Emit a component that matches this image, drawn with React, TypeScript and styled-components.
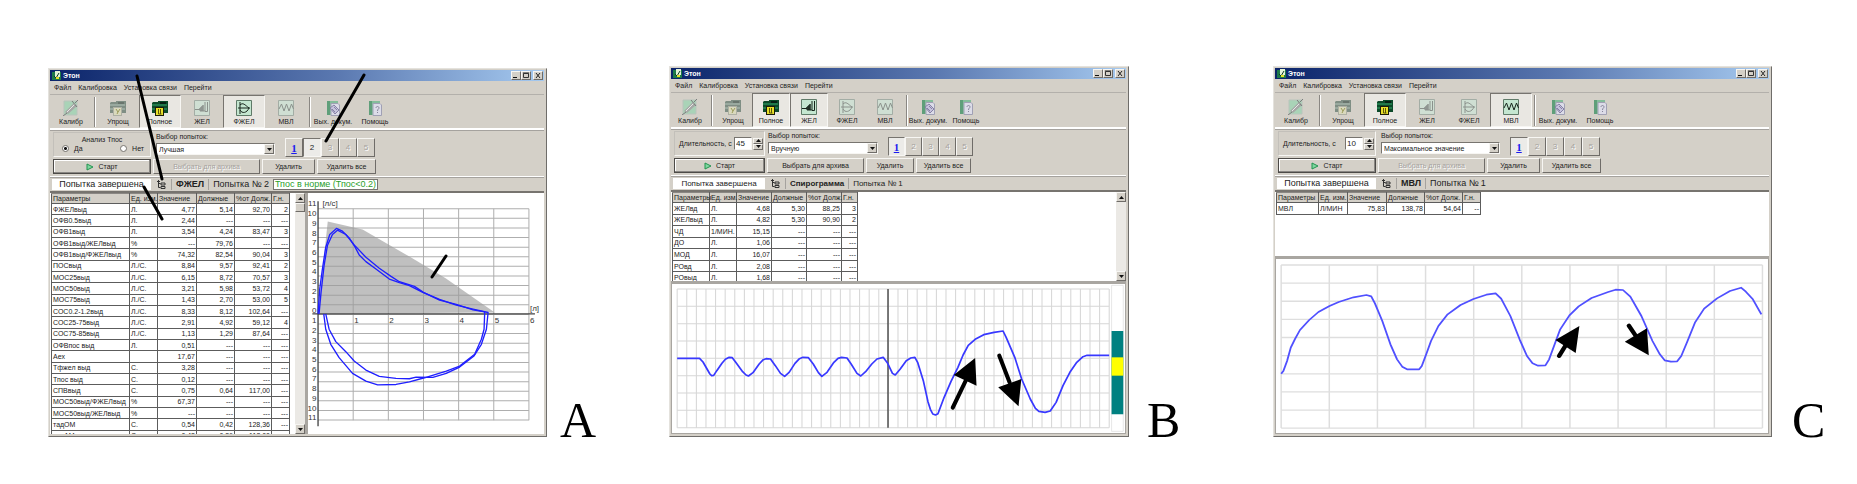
import React, { useState } from "react";
import styled, { createGlobalStyle, css } from "styled-components";

const face = "#d4d0c8";
const shade = "#8a8783";
const light = "#f7f6f3";

const GlobalStyle = createGlobalStyle`
  *, *::before, *::after { box-sizing: border-box; }
  body { margin: 0; background: #fff; }
  button, input, select { font: inherit; color: inherit; margin: 0; padding: 0; border-radius: 0; }
`;

const raised = css`
  border: 1px solid;
  border-color: ${light} #6f6c68 #6f6c68 ${light};
`;
const sunken = css`
  border: 1px solid;
  border-color: #77746f ${light} ${light} #77746f;
`;

const Page = styled.main`
  display: grid;
  grid-template-columns: 499fr 122px 460fr 144px 499fr 85px;
  align-items: end;
  padding: 66px 0 46px 48px;
  font: 7px/9px "Liberation Sans", sans-serif;
  color: #222;
`;

const Letter = styled.span<{ $gap: number }>`
  padding-left: ${(p) => p.$gap}px;
  font: 50px/34px "Liberation Serif", serif;
  color: #000;
`;

const Window = styled.section`
  position: relative;
  min-width: 0;
  display: flex;
  flex-direction: column;
  background: ${face};
  border: 1px solid;
  border-color: #e4e2dd #6f6d6a #6f6d6a #e4e2dd;
  padding: 1px 2px 2px 1px;
`;

const TitleBar = styled.header`
  display: flex;
  align-items: center;
  height: 11px;
  padding: 0 1px 0 2px;
  background: linear-gradient(90deg, #0b246a, #5a78b0 58%, #a6caf0);
`;
const Title = styled.h1`
  flex: 1;
  margin: 0 0 0 2px;
  font: bold 7px/11px "Liberation Sans", sans-serif;
  color: #fff;
`;
const CaptionButton = styled.button`
  ${raised}
  display: flex;
  width: 10px;
  height: 9px;
  background: ${face};
  &:last-child { margin-left: 2px; }
  svg { display: block; width: 8px; height: 7px; }
`;

const MenuBar = styled.nav`
  display: flex;
  align-items: center;
  gap: 7px;
  height: 14px;
  padding-left: 4px;
  border-bottom: 1px solid #b3b0ab;
`;
const MenuLink = styled.a`
  color: inherit;
  text-decoration: none;
  white-space: nowrap;
`;

const Toolbar = styled.div<{ $height: number }>`
  display: flex;
  height: ${(p) => p.$height}px;
`;
const ToolDivider = styled.span`
  width: 1px;
  margin: 2px 2px 1px;
  background: ${shade};
  box-shadow: 1px 0 #fff;
`;
const Tool = styled.button<{ $width: number; $on?: boolean }>`
  display: flex;
  flex-direction: column;
  align-items: center;
  justify-content: flex-end;
  gap: 1px;
  width: ${(p) => p.$width}px;
  padding-bottom: 1px;
  background: ${(p) => (p.$on ? "#e9e7e2" : "transparent")};
  border: 1px solid transparent;
  ${(p) => p.$on && sunken}
  white-space: nowrap;
  svg { width: 16px; height: 16px; flex: none; }
`;

const Groove = styled.hr<{ $height: number }>`
  width: 100%;
  height: ${(p) => p.$height}px;
  margin: 0;
  border: 0;
  border-bottom: 1px solid #a5a29e;
  background: #fff;
`;

const Settings = styled.form`
  height: 45px;
  padding: 1px 3px 2px;
`;
const SettingsRow = styled.div`
  display: flex;
  height: 25px;
  margin-bottom: 2px;
`;
const Box = styled.fieldset<{ $width: number }>`
  width: ${(p) => p.$width}px;
  margin: 0;
  padding: 0;
  border: 1px solid;
  border-color: #c3c0ba ${light} ${light} #c3c0ba;
  min-width: 0;
`;
const Legend = styled.div`
  padding-top: 2px;
  text-align: center;
`;
const Radios = styled.div`
  display: flex;
  justify-content: space-between;
  padding: 0 6px 0 8px;
`;
const RadioLabel = styled.label`
  display: flex;
  align-items: center;
  gap: 5px;
  input {
    appearance: none;
    width: 7px;
    height: 7px;
    border: 1px solid #77746f;
    border-radius: 50%;
    background: #fff;
  }
  input:checked { background: radial-gradient(#111 1px, #fff 2px); }
`;
const Duration = styled.div`
  display: flex;
  align-items: center;
  justify-content: space-between;
  height: 23px;
  padding: 0 1px 0 4px;
  white-space: nowrap;
  input {
    ${sunken}
    width: 18px;
    height: 13px;
    padding-left: 1px;
    background: #fff;
    font-size: 8px;
  }
`;
const DurationField = styled.span`
  display: flex;
  align-items: center;
`;
const Spinner = styled.span`
  display: flex;
  flex-direction: column;
  margin-left: 1px;
  button {
    ${raised}
    display: flex;
    align-items: center;
    justify-content: center;
    width: 10px;
    height: 6px;
    background: ${face};
  }
  svg { display: block; width: 5px; height: 3px; }
`;
const Choice = styled.label<{ $width: number; $gap: number }>`
  position: relative;
  display: block;
  width: ${(p) => p.$width}px;
  margin-left: ${(p) => p.$gap}px;
  white-space: nowrap;
  select {
    ${sunken}
    appearance: none;
    display: block;
    width: 100%;
    height: 12px;
    padding: 0 11px 0 2px;
    background: #fff;
    margin-top: 2px;
  }
`;
const DropArrow = styled.span`
  ${raised}
  position: absolute;
  right: 1px;
  bottom: 3px;
  display: flex;
  align-items: center;
  justify-content: center;
  width: 10px;
  height: 10px;
  background: ${face};
  pointer-events: none;
  svg { width: 5px; height: 3px; }
`;
const Attempts = styled.div`
  display: flex;
  align-items: flex-end;
  margin-left: 10px;
`;
const Attempt = styled.button<{ $width: number; $down?: boolean; $marked?: boolean }>`
  ${(p) => (p.$down ? sunken : raised)}
  width: ${(p) => p.$width}px;
  height: 19px;
  background: ${(p) => (p.$down ? "#ecebe8" : face)};
  font-size: 8px;
  &:disabled { color: #a5a29e; text-shadow: 1px 1px #fff; }
  ${(p) =>
    p.$marked &&
    css`
      font: bold 11px/12px "Liberation Serif", serif;
      color: #1b1bf0;
      text-decoration: underline;
    `}
`;
const Commands = styled.div<{ $columns: string }>`
  display: grid;
  grid-template-columns: ${(p) => p.$columns};
  gap: 2px;
`;
const Command = styled.button<{ $main?: boolean }>`
  ${raised}
  display: flex;
  align-items: center;
  justify-content: center;
  gap: 4px;
  height: 15px;
  background: ${face};
  white-space: nowrap;
  ${(p) => p.$main && css`border: 1px solid #4d4b48; box-shadow: inset -1px -1px #8a8783, inset 1px 1px #fff;`}
  &:disabled { color: #a5a29e; text-shadow: 1px 1px #fff; }
  svg { width: 8px; height: 8px; }
`;

const Status = styled.div<{ $size: number }>`
  display: flex;
  align-items: center;
  height: 13px;
  padding: 1px 2px;
  font-size: ${(p) => p.$size}px;
  line-height: 11px;
  white-space: nowrap;
`;
const StatusText = styled.span<{ $width: number }>`
  width: ${(p) => p.$width}px;
  background: #fff;
  text-align: center;
`;
const StatusIcon = styled.span`
  display: flex;
  justify-content: center;
  width: 20px;
  svg { width: 9px; height: 9px; }
`;
const StatusName = styled.strong`
  padding: 0 4px;
  border: solid #a5a29e;
  border-width: 0 1px;
`;
const StatusAttempt = styled.span`
  padding: 0 4px;
`;
const Verdict = styled.span`
  padding: 0 2px;
  outline: 1px solid #77746f;
  outline-offset: -1px;
  background: #fff;
  color: #2ba02b;
`;

const Split = styled.div`
  display: flex;
  gap: 3px;
  height: 243px;
  background: #a9a6a1;
  border-top: 2px solid #77746f;
`;
const TablePane = styled.div<{ $width?: number; $height: number; $framed?: boolean }>`
  display: flex;
  justify-content: space-between;
  ${(p) => p.$width && `width: ${p.$width}px;`}
  height: ${(p) => p.$height}px;
  ${(p) => p.$framed && "border-top: 2px solid #77746f;"}
  padding-left: 1px;
  overflow: hidden;
  background: #fff;
`;
const Data = styled.table<{ $height: number }>`
  flex: none;
  table-layout: fixed;
  height: ${(p) => p.$height}px;
  border-collapse: collapse;
  white-space: nowrap;
  th, td {
    padding: 0 1px;
    border: 1px solid #5c5c5c;
    font-weight: normal;
    text-align: left;
  }
  th { background: ${face}; border-top-color: #8a8783; }
  td:nth-child(n + 3) { text-align: right; }
`;
const ScrollBar = styled.div`
  display: flex;
  flex-direction: column;
  justify-content: space-between;
  width: 10px;
  background: #ebe9e5;
  button {
    ${raised}
    display: flex;
    align-items: center;
    justify-content: center;
    height: 10px;
    background: ${face};
  }
  svg { width: 5px; height: 3px; }
`;
const Thumb = styled.span`
  ${raised}
  height: 9px;
  margin-bottom: auto;
  background: ${face};
`;
const ChartPane = styled.div<{ $height: number; $framed?: boolean }>`
  flex: ${(p) => (p.$framed ? "none" : "1")};
  min-width: 0;
  height: ${(p) => p.$height}px;
  background: #fff;
  ${(p) => p.$framed && "border: solid #a9a6a1; border-width: 3px 1px 1px;"}
  svg { display: block; width: 100%; height: 100%; }
`;
const Marks = styled.svg`
  position: absolute;
  left: -1px;
  top: -1px;
  width: 499px;
  height: 369px;
  pointer-events: none;
`;

const Down = () => <svg viewBox="0 0 5 3"><path d="M0 0h5L2.5 3z" fill="#111" /></svg>;
const Up = () => <svg viewBox="0 0 5 3"><path d="M0 3h5L2.5 0z" fill="#111" /></svg>;

type Glyph = "cal" | "simple" | "full" | "vc" | "fvc" | "mvv" | "doc" | "help";

function ToolIcon({ glyph, on }: { glyph: Glyph; on?: boolean }) {
  const ink = on ? "#17241b" : "#8b918c";
  const tint = on ? "#c4e6d0" : "#cfdfd3";
  const frame = <path d="M.5 .5h15v15H.5z" fill={tint} stroke={on ? "#5f7a68" : "#a3ada5"} />;
  switch (glyph) {
    case "cal":
      return (
        <svg viewBox="0 0 16 16">
          <path d="M1 1h13v14H1z" fill="#a9d3b7" />
          <path d="M1 1h13v14H1z" fill="none" stroke="#b9c4bc" />
          <path d="M2 12L11 3l3 3-9 8z" fill="#a6a8a6" />
          <path d="M4 12l8-8" stroke="#e6e6e6" />
          <path d="M12 3l3-3M9 1l5 6M0 16l4-3" stroke="#7c7c7c" fill="none" />
        </svg>
      );
    case "simple":
    case "full": {
      const full = glyph === "full";
      return (
        <svg viewBox="0 0 16 16">
          <path d="M0 3l1-1h5V1h10v12H0z" fill={full ? "#0c4a2a" : "#7f8e84"} />
          <path d="M0 5h15M0 9h15" stroke={full ? "#35a86b" : "#b5c4ba"} />
          <path d="M8 2h6v2H8z" fill={full ? "#062014" : "#69756d"} />
          <path d="M3 7h9v9H3z" fill={full ? "#1c1c08" : "#aeb0a4"} />
          <path d="M4 8h7v7H4z" fill={full ? "#e8e02a" : "#d9d9bd"} />
          {full ? <path d="M8.500 9v5M6.500 9v5h3" stroke="#5b5608" fill="none" /> : <path d="M6 9l2 3 2-3M8 12l-1 2" stroke="#9a9a58" fill="none" />}
        </svg>
      );
    }
    case "vc":
      return <svg viewBox="0 0 16 16">{frame}<path d="M1 9.500h5V8v3h1V7v4h1V6v5h1V5v6h2V2M13.500 2v9.500H11" fill="none" stroke={ink} /></svg>;
    case "fvc":
      return <svg viewBox="0 0 16 16">{frame}<path d="M4 2v12M2 8h12M4 5c3-3 5 0 9 3C11 13 6 14 4 10" fill="none" stroke={ink} /></svg>;
    case "mvv":
      return <svg viewBox="0 0 16 16">{frame}<path d="M1 9L3.500 4 6 11 8.500 4 11 11l2.500-7 2 5" fill="none" stroke={ink} /></svg>;
    default:
      return (
        <svg viewBox="0 0 16 16">
          <path d="M2 1h11v14H2z" fill="#84bd9b" />
          <path d="M2 1h3v14H2z" fill="#5f9f7a" />
          <path d="M6 3.500h7l1.500 1.500v10.500H6z" fill="#dcdce8" stroke="#a0a0b4" />
          {glyph === "doc" ? (
            <path d="M5 8l4-3 5 5-4 4zM7 9l3 3M9 7l3 3" fill="#c6c3dc" stroke="#8681a6" />
          ) : (
            <path d="M9 8c0-2 3-2 3 0 0 1-1.500 1-1.500 3M10.500 12v1" fill="none" stroke="#85859a" />
          )}
        </svg>
      );
  }
}

const TOOLS: { glyph: Glyph; label: string; divide?: boolean }[] = [
  { glyph: "cal", label: "Калибр", divide: true },
  { glyph: "simple", label: "Упрощ" },
  { glyph: "full", label: "Полное" },
  { glyph: "vc", label: "ЖЕЛ" },
  { glyph: "fvc", label: "ФЖЕЛ" },
  { glyph: "mvv", label: "МВЛ", divide: true },
  { glyph: "doc", label: "Вых. докум." },
  { glyph: "help", label: "Помощь" },
];

const dash = "---";
const HEAD = ["Параметры", "Ед. изм.", "Значение", "Должные", "%от Долж.", "Г.н."];
const ROWS_A = [
  ["ФЖЕЛвыд", "Л.", "4,77", "5,14", "92,70", "2"],
  ["ОФВ0.5выд", "Л.", "2,44", dash, dash, dash],
  ["ОФВ1выд", "Л.", "3,54", "4,24", "83,47", "3"],
  ["ОФВ1выд/ЖЕЛвыд", "%", dash, "79,76", dash, dash],
  ["ОФВ1выд/ФЖЕЛвыд", "%", "74,32", "82,54", "90,04", "3"],
  ["ПОСвыд", "Л./С.", "8,84", "9,57", "92,41", "2"],
  ["МОС25выд", "Л./С.", "6,15", "8,72", "70,57", "3"],
  ["МОС50выд", "Л./С.", "3,21", "5,98", "53,72", "4"],
  ["МОС75выд", "Л./С.", "1,43", "2,70", "53,00", "5"],
  ["СОС0.2-1.2выд", "Л./С.", "8,33", "8,12", "102,64", dash],
  ["СОС25-75выд", "Л./С.", "2,91", "4,92", "59,12", "4"],
  ["СОС75-85выд", "Л./С.", "1,13", "1,29", "87,64", dash],
  ["ОФВпос выд", "Л.", "0,51", dash, dash, dash],
  ["Аех", "", "17,67", dash, dash, dash],
  ["Тфжел выд", "С.", "3,28", dash, dash, dash],
  ["Тпос выд", "С.", "0,12", dash, dash, dash],
  ["СПВвыд", "С.", "0,75", "0,64", "117,00", dash],
  ["МОС50выд/ФЖЕЛвыд", "%", "67,37", dash, dash, dash],
  ["МОС50выд/ЖЕЛвыд", "%", dash, dash, dash, dash],
  ["тадОМ", "С.", "0,54", "0,42", "128,36", dash],
  ["тадАМ", "С.", "0,42", "0,36", "118,00", dash],
];
const ROWS_B = [
  ["ЖЕЛвд", "Л.", "4,68", "5,30", "88,25", "3"],
  ["ЖЕЛвыд", "Л.", "4,82", "5,30", "90,90", "2"],
  ["ЧД", "1/МИН.", "15,15", dash, dash, dash],
  ["ДО", "Л.", "1,06", dash, dash, dash],
  ["МОД", "Л.", "16,07", dash, dash, dash],
  ["РОвд", "Л.", "2,08", dash, dash, dash],
  ["РОвыд", "Л.", "1,68", dash, dash, dash],
];
const ROWS_C = [["МВЛ", "Л/МИН", "75,83", "138,78", "54,64", "--"]];

function DataTable({ rows, widths, height }: { rows: string[][]; widths: number[]; height: number }) {
  return (
    <Data $height={height} width={widths.reduce((a, b) => a + b, 0)}>
      <colgroup>{widths.map((w, i) => <col key={i} width={w} />)}</colgroup>
      <thead><tr>{HEAD.map((h) => <th key={h} scope="col">{h}</th>)}</tr></thead>
      <tbody>
        {rows.map((r) => <tr key={r[0]}>{r.map((c, i) => <td key={i}>{c}</td>)}</tr>)}
      </tbody>
    </Data>
  );
}

function Scroll({ thumb }: { thumb?: boolean }) {
  return (
    <ScrollBar>
      <button type="button" aria-label="Вверх"><Up /></button>
      {thumb && <Thumb />}
      <button type="button" aria-label="Вниз"><Down /></button>
    </ScrollBar>
  );
}

interface SpiroProps {
  id: string;
  toolbarHeight: number;
  toolWidth: number;
  active: Glyph[];
  left: number;
  choiceWidth: number;
  choiceGap: number;
  attemptWidth: number;
  columns: string;
  statusSize: number;
  duration?: string;
  choice: string;
  selected: number;
  canArchive?: boolean;
  name: string;
  verdict?: string;
  children: React.ReactNode;
}

function Spirometer(p: SpiroProps) {
  const [selected, setSelected] = useState(p.selected);
  const [duration, setDuration] = useState(p.duration ?? "");
  const last = p.selected;
  return (
    <Window>
      <TitleBar>
        <svg width="9" height="9" viewBox="0 0 9 9">
          <path d="M0 1h9v8H0z" fill="#1d7a49" />
          <path d="M3 0h5v6H3z" fill="#e3f3d8" />
          <path d="M2 5l2 2 3-5" stroke="#0d3c22" fill="none" />
          <path d="M4 6h3v2H4z" fill="#e8e02a" />
        </svg>
        <Title>Этон</Title>
        <CaptionButton aria-label="Свернуть"><svg viewBox="0 0 8 7"><path d="M1 5.500h4" stroke="#111" /></svg></CaptionButton>
        <CaptionButton aria-label="Развернуть"><svg viewBox="0 0 8 7"><path d="M1.500 1.500h5v4h-5zM1 1h6" stroke="#333" fill="none" /></svg></CaptionButton>
        <CaptionButton aria-label="Закрыть"><svg viewBox="0 0 8 7"><path d="M2 1l4 5M6 1L2 6" stroke="#222" /></svg></CaptionButton>
      </TitleBar>
      <MenuBar>
        {["Файл", "Калибровка", "Установка связи", "Перейти"].map((m) => <MenuLink key={m} href="#">{m}</MenuLink>)}
      </MenuBar>
      <Toolbar $height={p.toolbarHeight}>
        {TOOLS.map((t) => {
          const on = p.active.includes(t.glyph);
          return (
            <React.Fragment key={t.glyph}>
              <Tool $width={p.toolWidth} $on={on}><ToolIcon glyph={t.glyph} on={on} />{t.label}</Tool>
              {t.divide && <ToolDivider />}
            </React.Fragment>
          );
        })}
      </Toolbar>
      <Groove $height={3} />
      <Settings onSubmit={(e) => e.preventDefault()}>
        <SettingsRow>
          <Box $width={p.left}>
            {p.duration ? (
              <Duration>
                <label htmlFor={p.id + "-len"}>Длительность, с</label>
                <DurationField>
                  <input id={p.id + "-len"} value={duration} onChange={(e) => setDuration(e.target.value)} />
                  <Spinner>
                    <button type="button" aria-label="Больше"><Up /></button>
                    <button type="button" aria-label="Меньше"><Down /></button>
                  </Spinner>
                </DurationField>
              </Duration>
            ) : (
              <>
                <Legend>Анализ Тпос</Legend>
                <Radios>
                  <RadioLabel><input type="radio" name="tpos" defaultChecked />Да</RadioLabel>
                  <RadioLabel><input type="radio" name="tpos" />Нет</RadioLabel>
                </Radios>
              </>
            )}
          </Box>
          <Choice $width={p.choiceWidth} $gap={p.choiceGap}>
            Выбор попыток:
            <select><option>{p.choice}</option></select>
            <DropArrow><Down /></DropArrow>
          </Choice>
          <Attempts>
            {[1, 2, 3, 4, 5].map((n) => (
              <Attempt
                key={n}
                type="button"
                $width={p.attemptWidth}
                $down={n === selected}
                $marked={n === 1}
                disabled={n > last}
                onClick={() => setSelected(n)}
              >
                {n}
              </Attempt>
            ))}
          </Attempts>
        </SettingsRow>
        <Commands $columns={p.columns}>
          <Command $main>
            <svg viewBox="0 0 8 8"><path d="M1 1l6 3-6 3z" fill="#7fd6a0" stroke="#23944f" /></svg>
            Старт
          </Command>
          <Command type="button" disabled={!p.canArchive}>Выбрать для архива</Command>
          <Command type="button">Удалить</Command>
          <Command type="button">Удалить все</Command>
        </Commands>
      </Settings>
      <Groove $height={2} />
      <Status $size={p.statusSize}>
        <StatusText $width={p.left + 1}>Попытка завершена</StatusText>
        <StatusIcon>
          <svg viewBox="0 0 9 9"><path d="M1.500 0v7.500h2M1.500 3.500h2M0 1.500h3M4 3h4v2H4zM4 6.500h4v2H4z" fill="none" stroke="#333" /></svg>
        </StatusIcon>
        <StatusName>{p.name}</StatusName>
        <StatusAttempt>Попытка № {p.selected}</StatusAttempt>
        {p.verdict && <Verdict>{p.verdict}</Verdict>}
      </Status>
      {p.children}
    </Window>
  );
}

const range = (n: number) => Array.from({ length: n }, (_, i) => i);

function FlowVolumeChart() {
  return (
    <svg viewBox="27 23 705 720" preserveAspectRatio="xMinYMin meet">
      <path d="M57 384L86 108 190 132 330 213 437 277 585 380z" fill="#c0c0c0" />
      <g stroke="#9b9b9b" strokeWidth="3" opacity=".8">
        {range(23).map((i) => <path key={i} d={`M57 ${70 + i * 28.7}H687`} />)}
        {range(6).map((i) => <path key={i} d={`M${162 + i * 105} 70V702`} />)}
      </g>
      <path d="M57 48V720M40 384H705" stroke="#444" strokeWidth="4" />
      <g fill="none" stroke="#1f1fff" strokeWidth="4" strokeLinejoin="round">
        <path d="M57 384L62 310 70 250 80 185 92 147 112 129 130 137 150 157 165 180 180 208 200 228 230 250 270 280 300 291 330 300 370 320 420 341 470 358 520 370 565 380 560 430 545 475 523 510 480 543 440 562 400 574 350 573 330 578 290 577 240 571 200 552 165 525 140 497 110 467 90 430 80 384" />
        <path d="M60 384L66 320 75 240 85 180 100 147 115 134 140 147 165 178 200 215 240 248 275 272 300 288 345 302 372 320 420 343 470 356 520 372 555 378 553 430 545 460 525 505 480 540 440 555 375 575 330 587 290 595 235 596 200 585 160 562 120 515 95 475 80 430 74 384" />
      </g>
      <g fontFamily="Liberation Sans, sans-serif" fontSize="24" fill="#333">
        {range(12).map((i) => <text key={i} x="52" y={382 - i * 29} textAnchor="end">{i}</text>)}
        {range(11).map((i) => <text key={i} x="52" y={412 + i * 29} textAnchor="end">{i + 1}</text>)}
        {range(6).map((i) => <text key={i} x={165 + i * 105} y="410">{i + 1}</text>)}
        <text x="70" y="62">[л/с]</text>
        <text x="690" y="377">[л]</text>
      </g>
    </svg>
  );
}

function VitalCapacityChart() {
  return (
    <svg viewBox="35 30 1315 447" preserveAspectRatio="none">
      <g stroke="#d6d6d6" strokeWidth="3">
        {range(46).map((i) => <path key={i} d={`M${50 + i * 27.87} 45V461`} />)}
        {range(9).map((i) => <path key={i} d={`M50 ${45 + i * 52}H1304`} />)}
      </g>
      <path d="M662 45V461" stroke="#444" strokeWidth="4" />
      <path d="M1311 34h34v438h-34z" fill="#fff" stroke="#ddd" strokeWidth="2" />
      <path d="M1311 171h34v250h-34z" fill="#008080" />
      <path d="M1311 250h34v55h-34z" fill="#ff0" />
      <polyline
        fill="none"
        stroke="#3838ff"
        strokeWidth="5"
        strokeLinejoin="round"
        points="50,253 115,253 125,264 145,300 150,305 156,304 165,290 180,268 190,256 201,250 210,251 220,265 240,293 250,303 257,306 270,296 288,270 300,257 308,254 321,255 335,275 350,298 362,307 375,295 392,268 405,254 415,250 431,251 445,270 460,296 470,307 485,295 505,265 517,253 527,250 543,252 555,270 572,298 583,306 597,293 615,270 630,255 648,250 660,266 675,298 683,303 697,286 715,260 728,252 740,250 748,265 765,322 778,383 785,406 792,420 800,423 807,419 825,370 845,322 865,280 880,243 895,214 915,196 940,182 970,175 996,171 1005,190 1030,250 1050,315 1075,375 1090,403 1100,412 1118,415 1133,411 1150,385 1170,335 1190,295 1210,265 1228,248 1240,244 1304,244"
      />
      <path d="M850 401L890 315M985 245L1015 325" stroke="#000" strokeWidth="12" strokeLinecap="round" />
      <path d="M915 252L853 303 919 335zM1041 397L982 340 1049 315z" />
    </svg>
  );
}

function VentilationChart() {
  return (
    <svg viewBox="30 149 1333 522" preserveAspectRatio="none">
      <g stroke="#dedede" strokeWidth="4">
        {range(11).map((i) => <path key={i} d={`M${44 + i * 130.4} 167V656`} />)}
        {range(10).map((i) => <path key={i} d={`M44 ${167 + i * 54.4}H1348`} />)}
      </g>
      <polyline
        fill="none"
        stroke="#5050ff"
        strokeWidth="5"
        strokeLinejoin="round"
        points="44,493 50,485 60,455 70,415 82,388 95,362 120,332 145,308 175,290 200,278 240,264 275,257 288,261 298,282 318,335 340,405 358,450 372,472 385,480 418,480 425,470 437,435 450,395 470,350 495,315 530,287 565,269 600,256 625,252 640,268 665,320 690,390 710,440 725,462 740,469 760,468 770,450 785,405 800,360 825,318 850,291 885,266 930,248 950,241 970,242 990,262 1020,320 1050,395 1070,435 1083,453 1100,457 1117,456 1128,440 1145,395 1165,340 1190,298 1225,267 1260,245 1290,235 1303,247 1322,270 1345,315"
      />
      <path d="M797 440L815 408M986 349L1005 380" stroke="#000" strokeWidth="12" strokeLinecap="round" />
      <path d="M852 350L787 392 842 431zM1040 438L975 397 1035 357z" />
    </svg>
  );
}

export default function App() {
  return (
    <>
      <GlobalStyle />
      <Page>
        <Spirometer
          id="a"
          toolbarHeight={33}
          toolWidth={42}
          active={["full", "fvc"]}
          left={98}
          choiceWidth={119}
          choiceGap={5}
          attemptWidth={18}
          columns="98px 107px 53px 59px"
          statusSize={9}
          choice="Лучшая"
          selected={2}
          name="ФЖЕЛ"
          verdict="Тпос в норме (Тпос<0.2)"
        >
          <Split>
            <TablePane $width={255} $height={241}>
              <DataTable rows={ROWS_A} widths={[78, 28, 39, 38, 37, 18]} height={249} />
              <Scroll thumb />
            </TablePane>
            <ChartPane $height={241}><FlowVolumeChart /></ChartPane>
          </Split>
          <Marks viewBox="48 68 499 369">
            <path
              d="M137 76L162 179M144 187L162 219M364 75L326 141M446 256L432 277"
              stroke="#000"
              strokeWidth="3"
              strokeLinecap="round"
              fill="none"
            />
          </Marks>
        </Spirometer>
        <Letter $gap={13}>A</Letter>

        <Spirometer
          id="b"
          toolbarHeight={34}
          toolWidth={38}
          active={["full", "vc"]}
          left={91}
          choiceWidth={110}
          choiceGap={3}
          attemptWidth={17}
          columns="91px 97px 48px 55px"
          statusSize={8}
          duration="45"
          choice="Вручную"
          selected={1}
          canArchive
          name="Спирограмма"
        >
          <TablePane $height={91} $framed>
            <DataTable rows={ROWS_B} widths={[37, 27, 35, 35, 35, 16]} height={92} />
            <Scroll />
          </TablePane>
          <ChartPane $height={153} $framed><VitalCapacityChart /></ChartPane>
        </Spirometer>
        <Letter $gap={18}>B</Letter>

        <Spirometer
          id="c"
          toolbarHeight={34}
          toolWidth={42}
          active={["full", "mvv"]}
          left={98}
          choiceWidth={119}
          choiceGap={5}
          attemptWidth={18}
          columns="98px 107px 53px 59px"
          statusSize={9}
          duration="10"
          choice="Максимальное значение"
          selected={1}
          name="МВЛ"
        >
          <TablePane $height={66} $framed>
            <DataTable rows={ROWS_C} widths={[42, 29, 39, 38, 38, 18]} height={23} />
          </TablePane>
          <ChartPane $height={178} $framed><VentilationChart /></ChartPane>
        </Spirometer>
        <Letter $gap={20}>C</Letter>
      </Page>
    </>
  );
}
